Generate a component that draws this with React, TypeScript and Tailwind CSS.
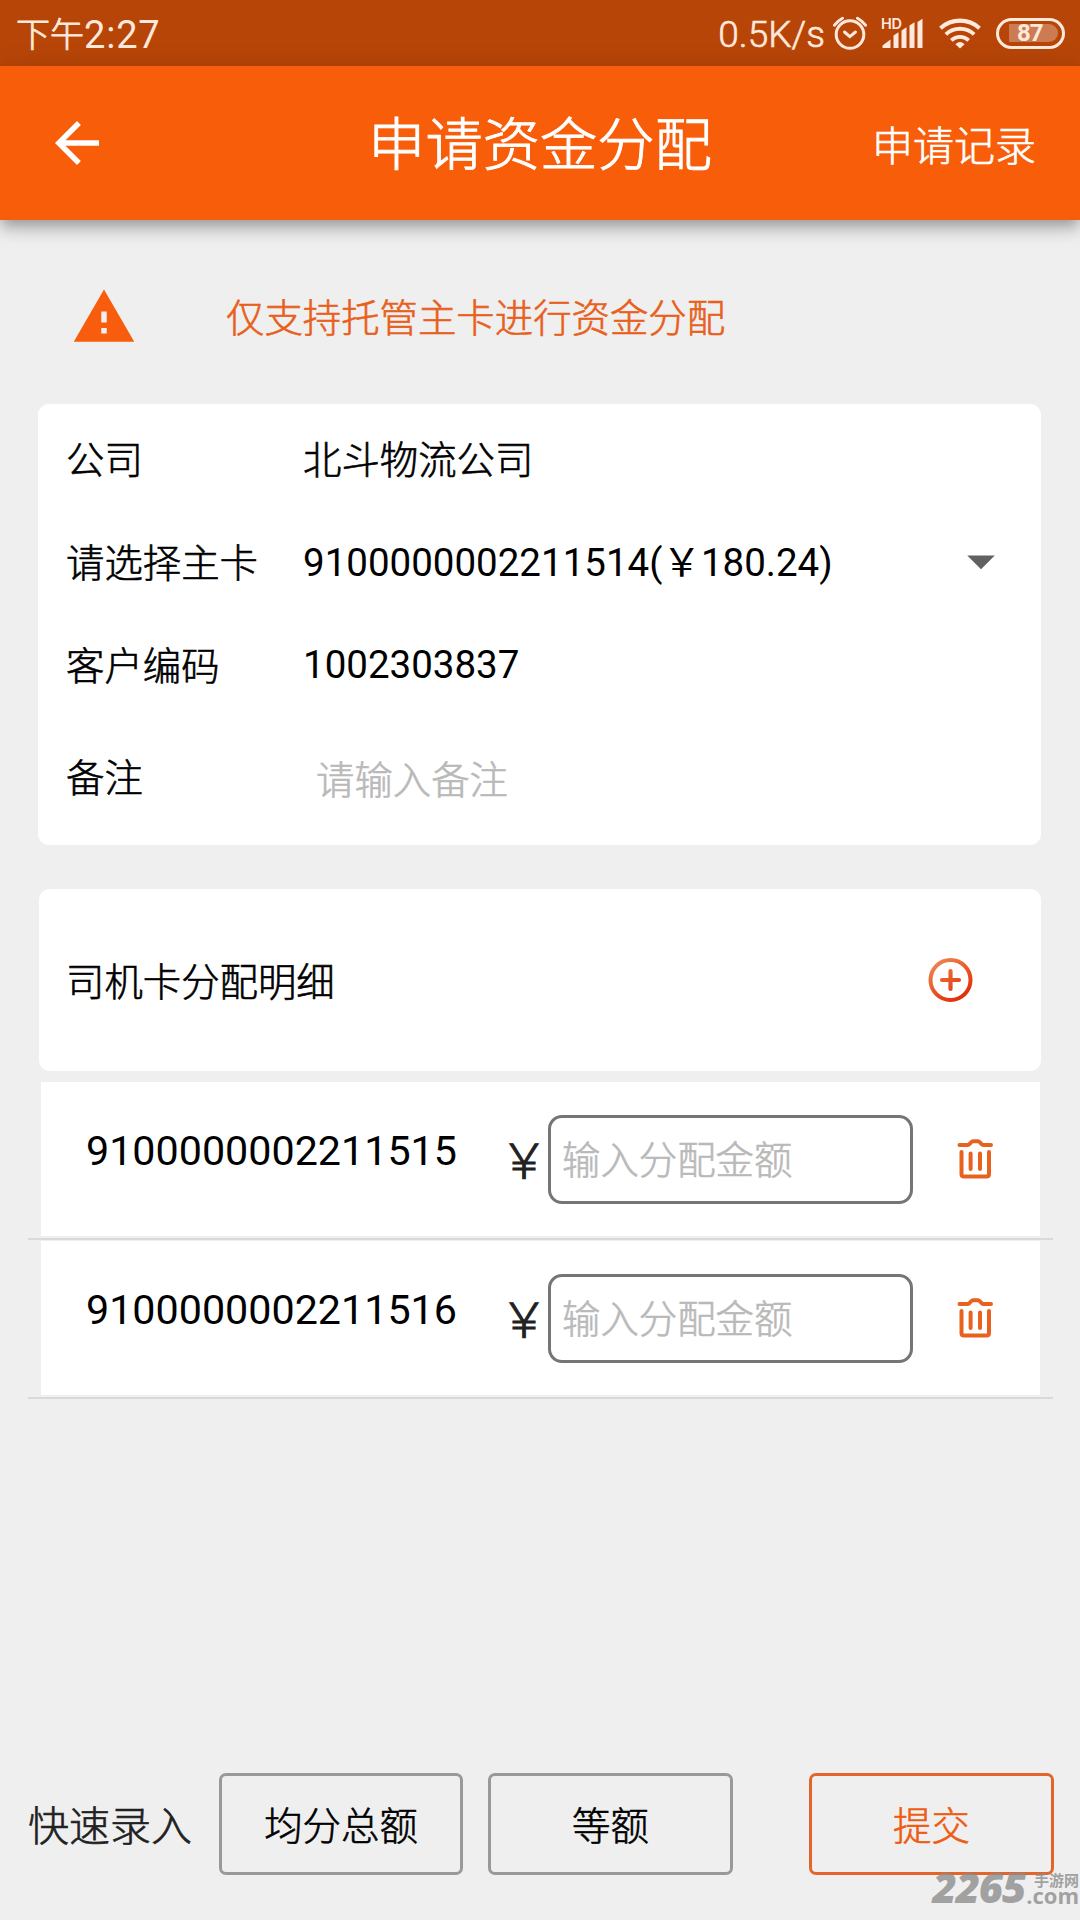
import React from "react";

const TINT = "#ffe9dc";

function AlarmIcon() {
  return (
    <svg className="ml-[8px] h-[38px] w-[38px]" viewBox="0 0 38 38" fill="none" stroke={TINT} strokeWidth="3" strokeLinecap="round">
      <circle cx="17" cy="20.5" r="13.8" />
      <path d="M11.500 18l5.300 4.600L22.500 18" />
      <path d="M1.500 11.200A24 24 0 0 1 9.500 4.200M32.500 11.200A24 24 0 0 0 24.500 4.200" />
    </svg>
  );
}

function SignalIcon() {
  return (
    <svg className="ml-[9px] h-[34px] w-[45px] overflow-visible" viewBox="-1 0 45 34" fill={TINT}>
      <text x="0" y="13" fontFamily="Inter, Roboto, sans-serif" fontSize="14.5" fontWeight="600" letterSpacing="-0.3">HD</text>
      <path d="M1.500 32v-2.500l8-6V32zM12.500 32V19.500l5-3.200V32zM20.500 32V14.500l5-3.200V32zM28.500 32V9.500l5-3.200V32zM36.500 32V6l5-3.200V32z" />
    </svg>
  );
}

function WifiIcon() {
  return (
    <svg className="ml-[13px] h-[34px] w-[44px]" viewBox="0 0 44 34" fill="none" stroke={TINT}>
      <path d="M2.500 12.200A29 29 0 0 1 41.500 12.200" strokeWidth="4.200" />
      <path d="M7.800 18.300A21 21 0 0 1 36.200 18.300" strokeWidth="3.800" />
      <path d="M13.300 24.300A13 13 0 0 1 30.700 24.300" strokeWidth="3.800" />
      <path d="M22 32.500l-4.600-4.300Q22 24 26.600 28.200z" fill={TINT} stroke="none" />
    </svg>
  );
}

function Battery() {
  return (
    <div className="ml-[14px] flex h-[31px] w-[69px] items-center rounded-full border-[3px] border-[#ffe9dc] pl-[10px]">
      <div className="flex h-[18px] w-[49px] items-center rounded-r-full bg-[#cc7b52] pl-[8px]">
        <span className="text-[24px] leading-[18px] font-bold tracking-[-1px]">87</span>
      </div>
    </div>
  );
}

function WarningIcon() {
  return (
    <svg className="h-[66px] w-[66px]" viewBox="0 0 24 24" fill="#f75d0d">
      <path d="M1 21h22L12 2 1 21zm12-3h-2v-2h2v2zm0-4h-2v-4h2v4z" />
    </svg>
  );
}

function PlusIcon() {
  return (
    <svg className="h-[46px] w-[46px]" viewBox="0 0 46 46" fill="none" stroke="url(#plus)" strokeLinecap="round">
      <defs>
        <linearGradient id="plus" gradientUnits="userSpaceOnUse" x1="10" y1="4" x2="36" y2="42">
          <stop offset="0" stopColor="#ee8350" />
          <stop offset="0.5" stopColor="#ea5524" />
          <stop offset="1" stopColor="#e02a08" />
        </linearGradient>
      </defs>
      <circle cx="22.500" cy="23" r="20" strokeWidth="4" />
      <path d="M14 23h17M22.500 14v18" strokeWidth="4.200" />
    </svg>
  );
}

function TrashIcon() {
  return (
    <svg className="h-[40px] w-[38px]" viewBox="0 0 38 40" fill="none" stroke="#e8611f" strokeWidth="4" strokeLinecap="round" strokeLinejoin="round">
      <path d="M2.500 6h8c2.500 0 3-3.700 5.500-3.700h5c2.500 0 3 3.700 5.500 3.700H34" />
      <path d="M4.500 13v22q0 2.500 2.500 2.500h22.500q2.500 0 2.500-2.500v-22" />
      <path d="M13.600 14.500v15.500M23 14.500v15.500" />
    </svg>
  );
}

function Field({ label, children }: { label: string; children: React.ReactNode }) {
  return (
    <div className="flex h-[103px] items-center">
      <span className="w-[237px] shrink-0 pt-[2px] font-light [-webkit-text-stroke:0.6px_currentColor]">{label}</span>
      {children}
    </div>
  );
}

function CardRow({ number }: { number: string }) {
  return (
    <div>
      <div className="mx-[13px] flex h-[154px] items-center bg-white pl-[45px]">
        <span className="w-[414px] pb-[17px] text-[41.25px]">{number}</span>
        <span className="w-[48px] pt-[5px] text-[48px] font-light text-[#212121] [-webkit-text-stroke:1px_currentColor]">￥</span>
        <div className="flex h-[89px] w-[365px] items-center rounded-[14px] border-[3px] border-[#757575] pt-[3px] pl-[11px] font-light text-[#b9b9b9] [-webkit-text-stroke:0.6px_currentColor]">
          输入分配金额
        </div>
        <div className="ml-[44px]">
          <TrashIcon />
        </div>
      </div>
      <div className="flex h-[5px] items-center">
        <div className="h-[2px] w-full bg-[#d9d9d9]" />
      </div>
    </div>
  );
}

export default function App() {
  return (
    <div className="relative flex h-[1920px] w-[1080px] flex-col overflow-hidden bg-[#efefef] font-['Roboto','Noto_Sans_CJK_SC',sans-serif] text-[38.4px] leading-[46px] font-normal whitespace-nowrap text-black">
      <div className="z-10 flex h-[66px] shrink-0 items-center bg-[#b74508] pr-[15px] pl-[16px] text-[#ffe9dc]">
        <span className="pt-[3px] text-[34px] font-light [-webkit-text-stroke:0.8px_currentColor]">下午</span>
        <span className="pt-[3px] text-[38px] tracking-[0.8px]">2:27</span>
        <span className="ml-auto pt-[3px] text-[37px] font-light [-webkit-text-stroke:0.6px_currentColor]">0.5K/s</span>
        <AlarmIcon />
        <SignalIcon />
        <WifiIcon />
        <Battery />
      </div>

      <header className="z-10 grid h-[154px] shrink-0 grid-cols-[1fr_auto_1fr] items-center bg-[#f85d0a] pr-[44px] pl-[44px] text-white shadow-[0_5.5px_11px_-2.75px_rgba(0,0,0,0.2),0_11px_13.75px_rgba(0,0,0,0.14),0_2.75px_27.5px_rgba(0,0,0,0.12)]">
        <svg className="h-[66px] w-[66px]" viewBox="0 0 24 24" fill="currentColor">
          <path d="M20 11H7.830l5.590-5.590L12 4l-8 8 8 8 1.410-1.410L7.830 13H20v-2z" />
        </svg>
        <h1 className="pt-[6px] text-[57.3px] leading-[66px] font-light [-webkit-text-stroke:0.9px_currentColor]">申请资金分配</h1>
        <span className="justify-self-end pt-[7px] text-[41px] font-light [-webkit-text-stroke:0.6px_currentColor]">申请记录</span>
      </header>

      <div className="flex h-[184px] shrink-0 items-center pt-[9px] pl-[71px] text-[#e8601c]">
        <WarningIcon />
        <span className="ml-[89px] pt-[5px] font-light [-webkit-text-stroke:0.6px_currentColor]">仅支持托管主卡进行资金分配</span>
      </div>

      <section className="mr-[39px] ml-[38px] h-[441px] shrink-0 rounded-[11px] bg-white pt-[4px] pl-[28px]">
        <Field label="公司">
          <span className="pt-[2px] font-light [-webkit-text-stroke:0.6px_currentColor]">北斗物流公司</span>
        </Field>
        <Field label="请选择主卡">
          <span className="text-[38.5px]">9100000002211514(￥180.24)</span>
          <svg className="mr-[27px] mb-[3px] ml-auto h-[66px] w-[66px]" viewBox="0 0 24 24" fill="#616161">
            <path d="M7 10l5 5 5-5z" />
          </svg>
        </Field>
        <Field label="客户编码">
          <span className="pb-[2px] text-[38.5px]">1002303837</span>
        </Field>
        <div className="flex h-[122px] items-center font-light [-webkit-text-stroke:0.6px_currentColor]">
          <span className="w-[250px] pt-[2px]">备注</span>
          <span className="pt-[5px] text-[#b9b9b9]">请输入备注</span>
        </div>
      </section>

      <section className="mx-[39px] mt-[44px] flex h-[182px] shrink-0 items-center rounded-[11px] bg-white pr-[67px] pl-[27px]">
        <span className="pt-[6px] font-light [-webkit-text-stroke:0.6px_currentColor]">司机卡分配明细</span>
        <div className="ml-auto">
          <PlusIcon />
        </div>
      </section>

      <div className="mt-[11px] mr-[27px] ml-[28px]">
        <CardRow number="9100000002211515" />
        <CardRow number="9100000002211516" />
      </div>

      <footer className="mt-auto mb-[45px] flex h-[102px] shrink-0 items-center pr-[26px] pl-[28px] font-light [-webkit-text-stroke:0.6px_currentColor]">
        <span className="w-[191px] pt-[5px] text-[41px] text-[#212121]">快速录入</span>
        <button className="h-[102px] w-[244px] rounded-[7px] border-[3px] border-[#999999] pt-[5px]">均分总额</button>
        <button className="ml-[25px] h-[102px] w-[245px] rounded-[7px] border-[3px] border-[#999999] pt-[5px]">等额</button>
        <button className="ml-auto h-[102px] w-[245px] rounded-[7px] border-[3px] border-[#e2662c] pt-[5px] text-[#ee5c14]">提交</button>
      </footer>

      <div className="absolute right-[1px] bottom-[17px] flex items-end text-[#8c8c8c]/80">
        <span className="mr-[1px] mb-[-3px] font-['Open_Sans'] text-[42px] leading-[38px] font-extrabold tracking-[-1.2px] italic">2265</span>
        <div className="flex flex-col items-end font-bold">
          <span className="text-[15px] leading-[14px]">手游网</span>
          <span className="font-['Open_Sans'] text-[22px] leading-[15px] font-bold">.com</span>
        </div>
      </div>
    </div>
  );
}
